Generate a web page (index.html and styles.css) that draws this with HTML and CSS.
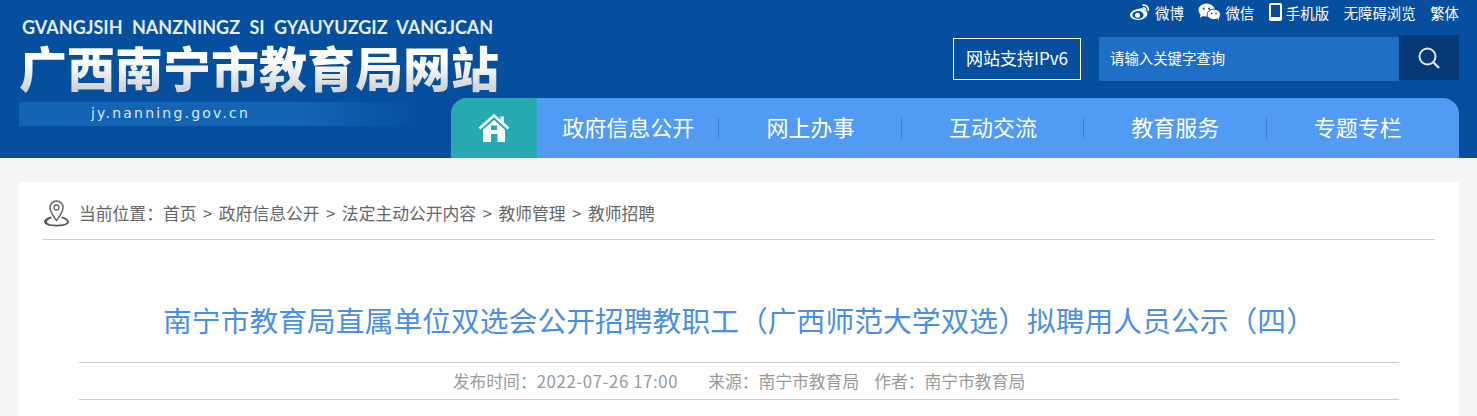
FILE: index.html
```html
<!DOCTYPE html>
<html lang="zh-CN">
  <head>
    <meta charset="UTF-8" />
    <title>南宁市教育局直属单位双选会公开招聘教职工</title>
    <link rel="stylesheet" href="styles.css">
  </head>
  <body>
    <div class="header">
      <div class="logo">
        <div class="logo-zhuang">GVANGJSIH NANZNINGZ SI GYAUYUZGIZ VANGJCAN</div>
        <div class="logo-title">广西南宁市教育局网站</div>
        <div class="logo-url">jy.nanning.gov.cn</div>
      </div>
      <div class="header-right">
        <div class="top-links">
          <a class="top-link">
            <svg class="weibo-icon" viewBox="0 0 22 18">
              <path fill="#fff" d="M9 6c3.900-1.500 6.700-.9 6.500 1.600 2 .6 3 1.800 3 3.200 0 3.200-4.300 6.200-9.300 6.200C4.700 17 1 15 1 11.800 1 9.900 3.800 7 9 6z"/>
              <ellipse cx="9" cy="12" rx="5.600" ry="3.900" fill="#054f9e"/>
              <circle cx="8.500" cy="12.200" r="2.500" fill="#fff"/>
              <path fill="none" stroke="#fff" stroke-width="1.700" d="M13.500 2.200c3.500-.8 6.500 1.800 5.800 5.800M13.900 5c1.700-.3 3 .9 2.700 2.600"/>
            </svg>
            微博
          </a>
          <a class="top-link">
            <svg class="wechat-icon" viewBox="0 0 24 18">
              <ellipse cx="9" cy="7" rx="8.500" ry="6.800" fill="#fff"/>
              <path fill="#fff" d="M3 10l-1 5 5-3z"/>
              <ellipse cx="16.500" cy="11.500" rx="7" ry="5.500" fill="#fff" stroke="#054f9e"/>
              <path fill="#fff" d="M20 15l2 3-.5-4z"/>
              <circle cx="6" cy="5.500" r="1.100" fill="#054f9e"/>
              <circle cx="11.500" cy="5.500" r="1.100" fill="#054f9e"/>
              <circle cx="14.300" cy="10.500" r=".9" fill="#054f9e"/>
              <circle cx="18.800" cy="10.500" r=".9" fill="#054f9e"/>
            </svg>
            微信
          </a>
          <a class="top-link">
            <svg class="phone-icon" viewBox="0 0 13 18">
              <path fill="#fff" fill-rule="evenodd" d="M2 0h9a2 2 0 0 1 2 2v14a2 2 0 0 1-2 2H2a2 2 0 0 1-2-2V2a2 2 0 0 1 2-2zM2 2v12h9V2z"/>
            </svg>
            手机版
          </a>
          <a class="top-link">无障碍浏览</a>
          <a class="top-link">繁体</a>
        </div>
        <div class="tools">
          <div class="ipv6">网站支持IPv6</div>
          <div class="search">
            <div class="search-input">请输入关键字查询</div>
            <div class="search-btn">
              <svg viewBox="0 0 24 24" width="24" height="24">
                <circle cx="10.500" cy="10.500" r="8" fill="none" stroke="#dfe8f2" stroke-width="2"/>
                <path d="M16.500 16.500l5.500 5.500" stroke="#dfe8f2" stroke-width="2.400" fill="none"/>
              </svg>
            </div>
          </div>
        </div>
        <div class="nav">
          <div class="nav-home">
            <svg viewBox="0 0 32 30" width="32" height="30">
              <path fill="none" stroke="#fff" stroke-width="2.600" d="M1.500 15.500L16 2.500l14.500 13"/>
              <path fill="#fff" d="M22.500 3.500h3.500v6l-3.500-3z"/>
              <path fill="#fff" fill-rule="evenodd" d="M16 7l11 9.800V29H19.500v-8h-6.500v8H5V16.800zM13 12.500v4.500h6v-4.500z"/>
            </svg>
          </div>
          <a class="nav-item">政府信息公开</a>
          <a class="nav-item">网上办事</a>
          <a class="nav-item">互动交流</a>
          <a class="nav-item">教育服务</a>
          <a class="nav-item last">专题专栏</a>
        </div>
      </div>
    </div>

    <div class="main">
      <div class="crumbs">
        <svg class="pin-icon" viewBox="0 0 27 28" width="27" height="28">
          <path fill="none" stroke="#666" stroke-width="1.500" d="M13.500 21.500C10 16.500 7 13 7 8.500a6.500 6.500 0 0 1 13 0c0 4.500-3 8-6.500 13z"/>
          <circle cx="13.500" cy="8.500" r="2.500" fill="none" stroke="#666" stroke-width="1.300"/>
          <path fill="#555" d="M8 17.500C4 18.500 1 20.500 1 22.800 1 25.700 6.500 27.500 13.500 27.500S26 25.700 26 22.800c0-2.300-3-4.300-7-5.300l-.8 1.400c3.400.8 5.800 2.300 5.800 3.900 0 1.800-4.200 2.900-9.500 2.900S4 25.500 4 22.800c0-1.600 2.400-3.100 4.800-3.900z"/>
        </svg>
        <div class="crumb-text">
          当前位置：<a>首页</a><span class="crumb-sep">&gt;</span><a>政府信息公开</a><span class="crumb-sep">&gt;</span><a>法定主动公开内容</a><span class="crumb-sep">&gt;</span><a>教师管理</a><span class="crumb-sep">&gt;</span><a>教师招聘</a>
        </div>
      </div>
      <div class="article">
        <h1 class="article-title">南宁市教育局直属单位双选会公开招聘教职工（广西师范大学双选）拟聘用人员公示（四）</h1>
        <div class="article-meta">
          <span class="meta-time">发布时间：<span class="meta-date">2022-07-26 17:00</span></span>
          <span class="meta-source">来源：南宁市教育局</span>
          <span>作者：南宁市教育局</span>
        </div>
      </div>
    </div>
  </body>
</html>
```
FILE: styles.css
```css
html {
  overflow: hidden;
}

body {
  margin: 0;
  background-color: #f5f5f5;
  font-family: "Noto Sans CJK SC", "Liberation Sans", sans-serif;
}

.header {
  display: flex;
  height: 158px;
  background-color: #054f9e;
}

.logo {
  width: 432px;
  margin-left: 19px;
  flex-shrink: 0;
}

.logo-zhuang {
  height: 24px;
  margin: 17px 0 0 3px;
  font-family: Lato, "Liberation Sans", sans-serif;
  font-size: 18px;
  line-height: 20px;
  font-weight: bold;
  color: #e6ecf4;
  white-space: nowrap;
  word-spacing: 5px;
}

.logo-title {
  width: 484px;
  height: 59px;
  font-size: 48px;
  line-height: 50px;
  font-weight: 900;
  white-space: nowrap;
  background: linear-gradient(#ffffff 35%, #d4d4d8 80%);
  -webkit-background-clip: text;
  background-clip: text;
  color: transparent;
}

.logo-url {
  width: 400px;
  height: 24px;
  margin-top: 2px;
  padding-left: 72px;
  box-sizing: border-box;
  background: linear-gradient(90deg, #1464b6 70%, #054f9e 100%);
  font-family: "DejaVu Sans", sans-serif;
  font-size: 14px;
  line-height: 22px;
  letter-spacing: 2.200px;
  color: #dbe6f2;
}

.header-right {
  width: 1008px;
  flex-shrink: 0;
  display: flex;
  flex-direction: column;
}

.top-links {
  display: flex;
  justify-content: flex-end;
  align-items: center;
  height: 24px;
  gap: 14.600px;
  font-size: 14.400px;
  color: #fff;
}

.top-link {
  display: flex;
  align-items: center;
  gap: 4px;
  white-space: nowrap;
}

.weibo-icon {
  width: 22px;
  height: 18px;
}

.wechat-icon {
  width: 23px;
  height: 18px;
}

.phone-icon {
  width: 13px;
  height: 18px;
}

.tools {
  display: flex;
  justify-content: flex-end;
  align-items: flex-start;
  height: 74px;
  padding-top: 11px;
  box-sizing: border-box;
  gap: 18px;
}

.ipv6 {
  width: 128px;
  height: 42px;
  margin-top: 3px;
  box-sizing: border-box;
  border: 1px solid #fff;
  text-align: center;
  font-size: 17px;
  line-height: 38px;
  color: #fff;
}

.search {
  display: flex;
  width: 360px;
  height: 45px;
}

.search-input {
  flex: 1;
  height: 44px;
  margin-top: 2px;
  padding-left: 11px;
  box-sizing: border-box;
  background-color: #206fc6;
  font-size: 14.400px;
  line-height: 42px;
  color: #fff;
}

.search-btn {
  display: flex;
  align-items: center;
  justify-content: center;
  width: 60px;
  background-color: #053a76;
}

.nav {
  display: flex;
  height: 60px;
  background-color: #529bf5;
  border-radius: 16px 16px 0 0;
  overflow: hidden;
}

.nav-home {
  display: flex;
  align-items: center;
  justify-content: center;
  width: 86px;
  background-color: #26a9b0;
}

.nav-item {
  position: relative;
  width: 182.400px;
  box-sizing: border-box;
  text-align: center;
  font-size: 22px;
  line-height: 56px;
  color: #fff;
}

.nav-item::after {
  content: "";
  position: absolute;
  right: 0;
  top: 20px;
  height: 21px;
  width: 1px;
  background-color: #3a7fd2;
}

.nav-item.last::after {
  display: none;
}

.main {
  margin: 24px 18px 0 19px;
  padding: 0 24px;
  background-color: #fff;
}

.crumbs {
  display: flex;
  align-items: center;
  height: 52px;
  padding-top: 5px;
  gap: 9px;
  border-bottom: 1px solid #ccc;
  font-size: 16.800px;
  color: #666;
}

.pin-icon {
  flex-shrink: 0;
}

.crumb-text {
  white-space: nowrap;
}

.crumb-sep {
  margin: 0 6.500px;
}

.article {
  padding: 0 36px 16px;
}

.article-title {
  margin: 0;
  padding: 58px 0 20px;
  text-align: center;
  font-size: 28.800px;
  line-height: 44px;
  font-weight: normal;
  color: #4a8fe7;
  white-space: nowrap;
  border-bottom: 1px solid #ccc;
}

.article-meta {
  display: flex;
  justify-content: center;
  height: 36px;
  gap: 15px;
  border-bottom: 1px solid #ccc;
  font-size: 16.800px;
  line-height: 36px;
  color: #999;
}

.meta-date {
  letter-spacing: .6px;
}

.meta-source {
  margin-left: 15px;
}
```
